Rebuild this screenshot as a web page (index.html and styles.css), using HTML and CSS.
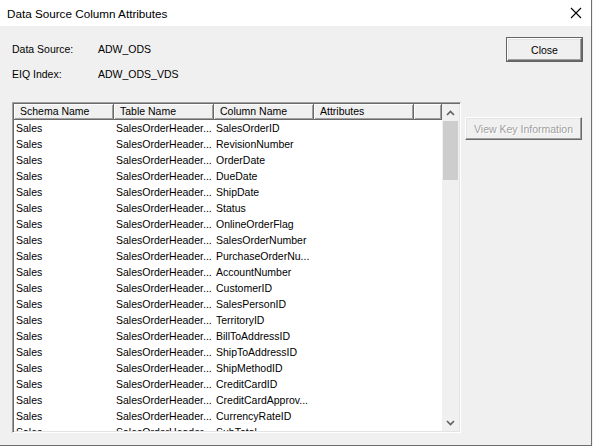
FILE: index.html
```html
<!DOCTYPE html>
<html lang="en">
<head>
    <meta charset="UTF-8">
    <title>Data Source Column Attributes</title>
    <link rel="stylesheet" href="styles.css">
</head>
<body>

<div class="window">
    <!-- Title Bar -->
    <div class="titlebar">
        <span class="title">Data Source Column Attributes</span>
        <svg class="close-x" width="12" height="12" viewBox="0 0 12 12">
            <path d="M1 1 L11 11 M11 1 L1 11" stroke="#000" stroke-width="1.1" fill="none"/>
        </svg>
    </div>

    <div class="client">
        <div class="main">
            <div class="info">
                <div class="info-row"><span class="info-label">Data Source:</span><span>ADW_ODS</span></div>
                <div class="info-row"><span class="info-label">EIQ Index:</span><span>ADW_ODS_VDS</span></div>
            </div>

            <!-- Column list -->
            <div class="list">
                <div class="list-body">
                    <div class="header">
                        <div class="hcell">Schema Name</div>
                        <div class="hcell">Table Name</div>
                        <div class="hcell">Column Name</div>
                        <div class="hcell">Attributes</div>
                        <div class="hcell filler"></div>
                    </div>
                    <div class="rows">
                        <div class="row"><span>Sales</span><span>SalesOrderHeader...</span><span>SalesOrderID</span></div>
                        <div class="row"><span>Sales</span><span>SalesOrderHeader...</span><span>RevisionNumber</span></div>
                        <div class="row"><span>Sales</span><span>SalesOrderHeader...</span><span>OrderDate</span></div>
                        <div class="row"><span>Sales</span><span>SalesOrderHeader...</span><span>DueDate</span></div>
                        <div class="row"><span>Sales</span><span>SalesOrderHeader...</span><span>ShipDate</span></div>
                        <div class="row"><span>Sales</span><span>SalesOrderHeader...</span><span>Status</span></div>
                        <div class="row"><span>Sales</span><span>SalesOrderHeader...</span><span>OnlineOrderFlag</span></div>
                        <div class="row"><span>Sales</span><span>SalesOrderHeader...</span><span>SalesOrderNumber</span></div>
                        <div class="row"><span>Sales</span><span>SalesOrderHeader...</span><span>PurchaseOrderNu...</span></div>
                        <div class="row"><span>Sales</span><span>SalesOrderHeader...</span><span>AccountNumber</span></div>
                        <div class="row"><span>Sales</span><span>SalesOrderHeader...</span><span>CustomerID</span></div>
                        <div class="row"><span>Sales</span><span>SalesOrderHeader...</span><span>SalesPersonID</span></div>
                        <div class="row"><span>Sales</span><span>SalesOrderHeader...</span><span>TerritoryID</span></div>
                        <div class="row"><span>Sales</span><span>SalesOrderHeader...</span><span>BillToAddressID</span></div>
                        <div class="row"><span>Sales</span><span>SalesOrderHeader...</span><span>ShipToAddressID</span></div>
                        <div class="row"><span>Sales</span><span>SalesOrderHeader...</span><span>ShipMethodID</span></div>
                        <div class="row"><span>Sales</span><span>SalesOrderHeader...</span><span>CreditCardID</span></div>
                        <div class="row"><span>Sales</span><span>SalesOrderHeader...</span><span>CreditCardApprov...</span></div>
                        <div class="row"><span>Sales</span><span>SalesOrderHeader...</span><span>CurrencyRateID</span></div>
                        <div class="row"><span>Sales</span><span>SalesOrderHeader...</span><span>SubTotal</span></div>
                    </div>
                </div>
                <div class="scrollbar">
                    <div class="arrow">
                        <svg width="9" height="6" viewBox="0 0 9 6"><path d="M1 5 L4.5 1.5 L8 5" stroke="#606060" stroke-width="1.6" fill="none"/></svg>
                    </div>
                    <div class="thumb"></div>
                    <div class="track"></div>
                    <div class="arrow">
                        <svg width="9" height="6" viewBox="0 0 9 6"><path d="M1 1 L4.5 4.5 L8 1" stroke="#606060" stroke-width="1.6" fill="none"/></svg>
                    </div>
                </div>
            </div>
        </div>

        <div class="side">
            <button class="btn default">Close</button>
            <button class="btn view-key" disabled>View Key Information</button>
        </div>
    </div>
</div>

</body>
</html>
```

FILE: styles.css
```css
/* General */
body {
    margin: 0;
    font-family: 'Liberation Sans', Arial, sans-serif;
    font-size: 10.5px;
    color: #000;
    background: #f0f0f0;
}

.window {
    width: 592px;
    height: 446px;
    box-sizing: border-box;
    border-right: 1px solid #6e6e6e;
    border-bottom: 1px solid #6e6e6e;
    background: #f0f0f0;
    display: flex;
    flex-direction: column;
}

/* Title bar */
.titlebar {
    height: 26px;
    background: #fff;
    display: flex;
    align-items: center;
    justify-content: space-between;
    padding: 0 9px 0 7px;
    flex-shrink: 0;
}
.title {
    font-size: 11.7px;
}

/* Client area */
.client {
    display: flex;
    flex: 1;
}
.main {
    width: 461px;
    padding-left: 12px;
    box-sizing: border-box;
}

.info {
    padding-top: 15px;
    display: flex;
    flex-direction: column;
    gap: 9px;
}
.info-row {
    display: flex;
    line-height: 16px;
}
.info-label {
    width: 86px;
}

/* List view */
.list {
    margin-top: 20px;
    height: 331px;
    box-sizing: border-box;
    display: flex;
    border: 1px solid;
    border-color: #a0a0a0 #fff #fff #a0a0a0;
    box-shadow: inset 1px 1px #696969, inset -1px -1px #e3e3e3;
    padding: 1px;
    background: #fff;
}
.list-body {
    flex: 1;
    overflow: hidden;
    display: flex;
    flex-direction: column;
}

.header {
    display: flex;
    height: 16px;
    flex-shrink: 0;
    background: #f0f0f0;
}
.hcell {
    width: 100px;
    box-sizing: border-box;
    padding-left: 6px;
    line-height: 15px;
    border-right: 1px solid #696969;
    border-bottom: 1px solid #696969;
    box-shadow: inset 1px 1px #fff, inset -1px -1px #a0a0a0;
    white-space: nowrap;
}
.hcell.filler {
    flex: 1;
    width: auto;
}

.rows {
    flex: 1;
    overflow: hidden;
}
.row {
    display: flex;
    height: 16px;
    line-height: 16px;
}
.row span {
    width: 100px;
    padding-left: 2px;
    box-sizing: border-box;
    white-space: nowrap;
    overflow: hidden;
}

/* Scrollbar */
.scrollbar {
    width: 17px;
    display: flex;
    flex-direction: column;
    background: #f0f0f0;
}
.arrow {
    height: 17px;
    display: flex;
    align-items: center;
    justify-content: center;
}
.thumb {
    height: 59px;
    margin: 0 1px;
    background: #cdcdcd;
}
.track {
    flex: 1;
}

/* Buttons */
.side {
    flex: 1;
    display: flex;
    flex-direction: column;
    align-items: flex-end;
    padding-right: 9px;
}
.btn {
    font-family: 'Liberation Sans', Arial, sans-serif;
    font-size: 10.5px;
    height: 23px;
    padding: 0;
    background: #f0f0f0;
    border: 1px solid;
    border-color: #fff #696969 #696969 #fff;
    box-shadow: inset -1px -1px #a0a0a0, inset 1px 1px #e3e3e3;
    color: #000;
}
.btn.default {
    margin-top: 12px;
    width: 75px;
    outline: 1px solid #646464;
    outline-offset: 0;
}
.btn.view-key {
    margin-top: 56px;
    width: 117px;
    color: #a0a0a0;
    text-shadow: 1px 1px #fff;
}
```
